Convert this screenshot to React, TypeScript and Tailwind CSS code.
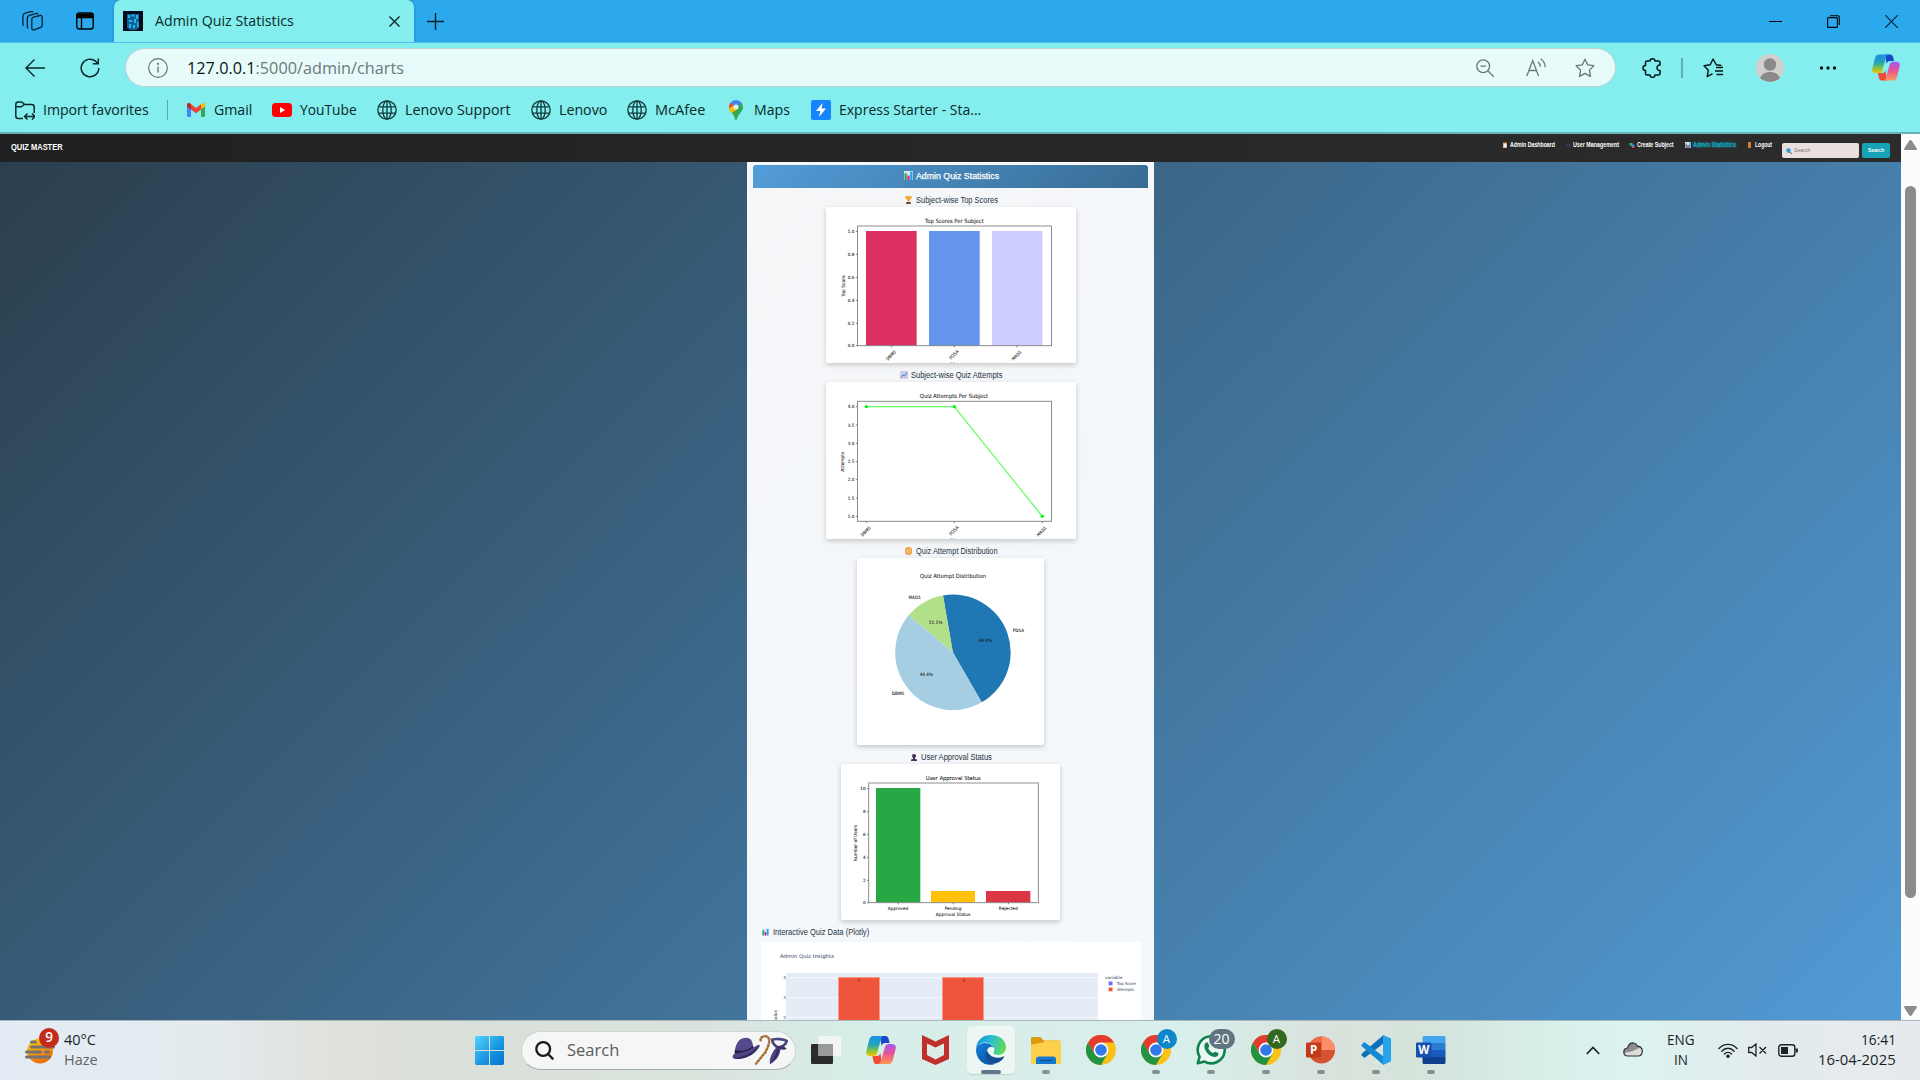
import { useLayoutEffect, useRef, useState } from "react";
import type { ReactNode } from "react";

/* Text squeezed or stretched horizontally to fill a given width. */
function Fit({ w, className = "", children }: { w: number; className?: string; children: ReactNode }) {
  const ref = useRef<HTMLSpanElement>(null);
  const [scale, setScale] = useState(1);
  useLayoutEffect(() => {
    if (ref.current) setScale(w / ref.current.offsetWidth);
  }, [w]);
  return (
    <span className={`block shrink-0 whitespace-nowrap ${className}`} style={{ width: w }}>
      <span ref={ref} className="inline-block origin-left" style={{ transform: `scaleX(${scale})` }}>
        {children}
      </span>
    </span>
  );
}

const UI = "font-['Open_Sans','Noto_Sans',sans-serif]";

function Globe() {
  return (
    <svg className="size-5 shrink-0" viewBox="0 0 20 20" fill="none" stroke="#12383a" strokeWidth="1.3">
      <circle cx="10" cy="10" r="9.2" />
      <ellipse cx="10" cy="10" rx="4.2" ry="9.2" />
      <path d="M1.6 6.8h16.8M1.6 13.2h16.8M10 .8v18.4" />
    </svg>
  );
}

function Copilot({ className, id }: { className: string; id: string }) {
  return (
    <svg className={className} viewBox="0 0 30 28">
      <defs>
        <linearGradient id={id + "a"} x1="0" y1="0" x2="0" y2="1">
          <stop offset="0" stopColor="#1b8fe8" />
          <stop offset=".45" stopColor="#23a6b4" />
          <stop offset=".75" stopColor="#8fc43a" />
          <stop offset="1" stopColor="#f5c400" />
        </linearGradient>
        <linearGradient id={id + "b"} x1="0" y1="0" x2="0" y2="1">
          <stop offset="0" stopColor="#a45cf0" />
          <stop offset=".45" stopColor="#e8519b" />
          <stop offset="1" stopColor="#fb9a55" />
        </linearGradient>
      </defs>
      <path d="M14 0h5.500c1.600 0 2.500 1 3 2.600L23.600 7H19c-2 0-2.900 1.300-3.400 3z" fill="#1746c9" />
      <path d="M16 28h-5.500c-1.600 0-2.500-1-3-2.600L6.400 20H11c2 0 2.900-1 3.400-3z" fill="#ee4a36" />
      <path d="M7.500 0H18c-1.600 0-2.500 1.500-3 3.200l-4 14C10.400 19.200 9 20 7.200 20H4c-3 0-4.400-2-3.600-5L3 4.500C3.800 1.500 5 0 7.500 0z" fill={`url(#${id}a)`} />
      <path d="M22.500 28H12c1.600 0 2.500-1.500 3-3.200l4-14c.6-2 2-2.900 3.800-2.900H26c3 0 4.400 2 3.600 5L27 23.500c-.8 2.800-2 4.500-4.500 4.500z" fill={`url(#${id}b)`} />
    </svg>
  );
}

function TitleBar() {
  return (
    <div className="flex h-[42px] items-center bg-[#2ba9ec]">
      <svg className="ml-[22px] h-5 w-[21px]" viewBox="0 0 21 20" fill="none" stroke="#06222f" strokeWidth="1.3" strokeLinejoin="round">
        <path d="M11.500 6.200l6.500-1.700c1.300-.3 2.200.4 2.200 1.700v8c0 1-.5 1.700-1.500 2.100l-6.500 2.500c-1.400.5-2.400-.2-2.400-1.600V8.500c0-1.200.6-2 1.700-2.300z" />
        <path d="M6.300 17.200C5.600 16.800 5.300 16.300 5.300 15.500V7c0-1.200.6-2 1.700-2.400l6.500-2c1.300-.4 2.200 0 2.600.8" />
        <path d="M1.900 14.700C1.200 14.300.9 13.800.9 13V4.800c0-1.200.6-2 1.700-2.400l5.900-1.700c1.300-.4 2.200 0 2.600.5" />
      </svg>
      <svg className="ml-[33px] size-[18px]" viewBox="0 0 18 18" fill="none" stroke="#000" strokeWidth="1.400">
        <rect x=".8" y="1" width="16.400" height="16" rx="2.500" />
        <path d="M1 2.500h16v3H1z" fill="#000" />
        <path d="M5.500 5v12" />
      </svg>
      <div className="ml-[20px] flex h-[42px] w-[300px] items-center rounded-t-[7px] bg-[#84eded] shadow-[0_0_3px_rgba(0,60,110,0.45)]">
        <svg className="ml-[9px] size-5" viewBox="0 0 20 20">
          <path d="M0 0h20v20H0z" fill="#020b1c" />
          <path d="M4 3h12v14l-3 2H7l-3-2z" fill="#0d5f96" />
          <path d="M5 4h2v3H5zM8.500 3.500h3v2h-3zM13 4h2v4h-2zM6 9h3v2H6zM11 8h2v4h-2zM6 13h2v4H6zM10 14h2v3h-2zM14 11h1.500v5H14z" fill="#26b6ee" />
        </svg>
        <Fit w={139} className={`ml-3 text-[14.500px] text-[#0a2a2c] ${UI}`}>Admin Quiz Statistics</Fit>
        <svg className="ml-[95px] size-[11px]" viewBox="0 0 11 11" stroke="#0c2022" strokeWidth="1.400">
          <path d="M.5.5l10 10M10.500.5l-10 10" />
        </svg>
      </div>
      <svg className="ml-[13px] size-[17px]" viewBox="0 0 17 17" stroke="#06222f" strokeWidth="1.400">
        <path d="M8.500 0v17M0 8.500h17" />
      </svg>
      <svg className="ml-auto h-[13px] w-[13px]" viewBox="0 0 13 13" stroke="#000" strokeWidth="1">
        <path d="M0 6.500h13" />
      </svg>
      <svg className="ml-[45px] size-[13px]" viewBox="0 0 13 13" fill="none" stroke="#000" strokeWidth="1.100">
        <rect x=".6" y="2.600" width="9.800" height="9.800" rx="1" />
        <path d="M3 .7h7.800c.9 0 1.500.6 1.500 1.500V10" />
      </svg>
      <svg className="mr-[22px] ml-[45px] size-[13px]" viewBox="0 0 13 13" stroke="#062536" strokeWidth="1.200">
        <path d="M0 0l13 13M13 0L0 13" />
      </svg>
    </div>
  );
}

const STAR = "M10 1.200l2.700 5.700 6.200.8-4.500 4.400 1.100 6.300L10 15.400l-5.500 3 1.100-6.300L1.100 7.700l6.200-.8z";

function AddressRow() {
  return (
    <div className="flex h-[49px] items-center">
      <svg className="ml-[25px] size-5" viewBox="0 0 20 20" fill="none" stroke="#082628" strokeWidth="1.400">
        <path d="M20 10H1M9.500 1.500L1 10l8.500 8.500" />
      </svg>
      <svg className="ml-[35px] size-5" viewBox="0 0 20 20" fill="none" stroke="#082628" strokeWidth="1.500">
        <path d="M18.800 10A8.800 8.800 0 1 1 15.600 3.200L18 5.500M18.300.5v5.300h-5.500" />
      </svg>
      <div className="ml-[25px] flex h-[39px] w-[1491px] items-center rounded-full border border-[#b9d3d3] bg-[#e7fbfb]">
        <svg className="ml-[22px] size-5" viewBox="0 0 20 20" fill="none" stroke="#667375" strokeWidth="1.200">
          <circle cx="10" cy="10" r="9.300" />
          <path d="M10 8.500v6" strokeWidth="1.400" />
          <circle cx="10" cy="5.800" r=".5" fill="#667375" />
        </svg>
        <Fit w={217} className={`ml-[19px] text-[17px] text-[#6d7879] ${UI}`}>
          <span className="text-[#0c1414]">127.0.0.1</span>:5000/admin/charts
        </Fit>
        <svg className="ml-auto size-[18px]" viewBox="0 0 18 18" fill="none" stroke="#6c7677" strokeWidth="1.300">
          <circle cx="7.200" cy="7.200" r="6.400" />
          <path d="M12 12l6 6M4.500 7.200h5.500" />
        </svg>
        <svg className="ml-[32px] h-[19px] w-5" viewBox="0 0 20 19" fill="none" stroke="#6c7677" strokeWidth="1.300">
          <path d="M.8 18L6.700 2.500 12.600 18M2.800 12.500h7.800M12 3.800c1.500 1.200 2.300 2.900 2.300 5M14.500.8c2.800 1.700 4.600 4.600 4.700 8.500" />
        </svg>
        <svg className="mr-[20px] ml-[29px] size-5" viewBox="0 0 20 20" fill="none" stroke="#6c7677" strokeWidth="1.300" strokeLinejoin="round">
          <path d={STAR} />
        </svg>
      </div>
      <svg className="ml-[26px] size-5" viewBox="0 0 20 20" fill="none" stroke="#051718" strokeWidth="1.500" strokeLinejoin="round">
        <path d="M5 3h3c0-3 5-3 5 0h3.500c1 0 1.500.6 1.500 1.500V7c-4-.6-4 6 0 5.500v3c0 1-.6 1.500-1.500 1.500H13c0 3.200-5 3.200-5 0H5c-1 0-1.500-.6-1.500-1.500V12.500C.2 12.500.2 7.500 3.500 7.500v-3C3.500 3.600 4 3 5 3z" />
      </svg>
      <div className="ml-[19px] h-5 w-0.5 bg-[#5fb2b3]" />
      <svg className="ml-[20px] size-5" viewBox="0 0 20 20" fill="none" stroke="#051718" strokeWidth="1.400" strokeLinejoin="round">
        <path d="M18.500 7.500l-5.300-.8L10 1 7.200 6.700 1 7.700l4.400 4.500L4.200 18.600l5.300-2.900M13 9.500h7M12 13h8M13.500 16.500H20" />
      </svg>
      <svg className="ml-[33px] size-7" viewBox="0 0 28 28">
        <circle cx="14" cy="14" r="14" fill="#d2d0ce" />
        <circle cx="14" cy="10.500" r="6.200" fill="#8b8988" />
        <path d="M4 24c2-4.500 6-6 10-6s8 1.500 10 6c-5.500 5-14.500 5-20 0z" fill="#8b8988" />
      </svg>
      <svg className="ml-[35px] h-1 w-[18px]" viewBox="0 0 18 4" fill="#051718">
        <circle cx="2.500" cy="2" r="1.700" />
        <circle cx="9" cy="2" r="1.700" />
        <circle cx="15.500" cy="2" r="1.700" />
      </svg>
      <Copilot id="cpt" className="ml-[35px] h-[27px] w-7" />
    </div>
  );
}

function FavoritesRow() {
  const label = `text-[14.500px] text-[#08282a] ${UI}`;
  return (
    <div className="flex h-9 items-center">
      <svg className="ml-[15px] h-[19px] w-5" viewBox="0 0 20 19" fill="none" stroke="#0b2b2d" strokeWidth="1.500">
        <path d="M8 17.500H3.500C1.800 17.500.8 16.500.8 15V3.500C.8 2 1.800 1 3.200 1h3.500l3 2.500h7c1.500 0 2.500 1 2.500 2.500v6M.8 5.800h5.500l3-2.300M10 15.500h9.500M12.500 12.500l-3 3 3 3M17 12.500l3 3-3 3" />
      </svg>
      <Fit w={106} className={`ml-2 ${label}`}>Import favorites</Fit>
      <div className="ml-[18px] h-5 w-px bg-[#58a9aa]" />
      <svg className="ml-[19px] h-[14px] w-[18px]" viewBox="0 0 18 14">
        <path d="M0 2v10.500C0 13.400.6 14 1.500 14H4V5z" fill="#4285f4" />
        <path d="M18 2v10.500c0 .9-.6 1.500-1.500 1.500H14V5z" fill="#34a853" />
        <path d="M14 1.200V6.500l4-3V2c0-2-2-2.500-3.200-1.500z" fill="#fbbc04" />
        <path d="M4 1.200V6.500L0 3.500V2C0 0 2-.5 3.200.5z" fill="#c5221f" />
        <path d="M4 1.200l5 3.800 5-3.800v5.300l-5 3.800-5-3.800z" fill="#ea4335" />
      </svg>
      <Fit w={38} className={`ml-[9px] ${label}`}>Gmail</Fit>
      <svg className="ml-[20px] h-[14px] w-5" viewBox="0 0 20 14">
        <rect width="20" height="14" rx="3.500" fill="#f00" />
        <path d="M8 4l5.200 3L8 10z" fill="#fff" />
      </svg>
      <Fit w={57} className={`ml-2 ${label}`}>YouTube</Fit>
      <div className="ml-5 flex"><Globe /></div>
      <Fit w={105} className={`ml-2 ${label}`}>Lenovo Support</Fit>
      <div className="ml-[21px] flex"><Globe /></div>
      <Fit w={48} className={`ml-2 ${label}`}>Lenovo</Fit>
      <div className="ml-5 flex"><Globe /></div>
      <Fit w={50} className={`ml-2 ${label}`}>McAfee</Fit>
      <svg className="ml-[24px] h-5 w-[14px]" viewBox="0 0 14 20">
        <path d="M2 11.500L11.800 2A7 7 0 0 1 14 7c0 5-5 6.500-6 12.300-.2.900-1.800.9-2 0C5.500 15.500 3.500 14 2 11.500z" fill="#34a853" />
        <path d="M1.700 2.400L5 5.500 0 9.500C-.2 6.500.2 4 1.700 2.400z" fill="#ea4335" />
        <path d="M1.700 2.400A7 7 0 0 1 12.300 2.400L9 6.500 5 5.500z" fill="#4285f4" />
        <path d="M0 8.500L4.600 5.500l3.500 4L2.800 13C1 11 .2 10 0 8.500z" fill="#fbbc04" />
        <circle cx="7" cy="7" r="2.500" fill="#d8f5f5" />
      </svg>
      <Fit w={36} className={`ml-[11px] ${label}`}>Maps</Fit>
      <svg className="ml-[21px] size-5" viewBox="0 0 20 20">
        <rect width="20" height="20" rx="2" fill="#1684fc" />
        <path d="M11.500 3L5 11h4.300L8 17l7-8.500h-4.300z" fill="#fff" />
      </svg>
      <Fit w={142} className={`ml-2 ${label}`}>Express Starter - Sta...</Fit>
    </div>
  );
}

function BarsEmoji({ className }: { className: string }) {
  return (
    <svg className={className} viewBox="0 0 16 16">
      <path d="M0 0h16v16H0z" fill="#e3e3f1" />
      <path d="M1 4h4v12H1z" fill="#19a66a" />
      <path d="M6 8h4v8H6z" fill="#f0128d" />
      <path d="M11 1h4v15h-4z" fill="#19a9e6" />
    </svg>
  );
}

function NavBar() {
  const link = "text-[6.500px] leading-none font-bold text-white font-['Liberation_Sans',sans-serif]";
  return (
    <nav className="flex h-7 bg-linear-to-r from-[#202020] to-[#2c2c2c]">
      <Fit w={52} className="mt-[8px] ml-[11px] text-[8.500px] leading-[11px] font-bold text-white font-['Liberation_Sans',sans-serif]">QUIZ MASTER</Fit>
      <div className="mt-[8px] ml-auto flex h-[6px] items-center">
        <svg className="h-[6px] w-1" viewBox="0 0 8 12">
          <path d="M0 1h8v11H0z" fill="#e8893a" />
          <path d="M1 3h6v8H1z" fill="#e9edf5" />
        </svg>
        <Fit w={45} className={`ml-[3px] ${link}`}>Admin Dashboard</Fit>
        <svg className="ml-[11px] h-[4px] w-[5px]" viewBox="0 0 10 8">
          <circle cx="2.500" cy="3" r="1.700" fill="#59407a" />
          <circle cx="7.500" cy="3" r="1.700" fill="#59407a" />
          <path d="M0 7h10v1H0z" fill="#59407a" />
        </svg>
        <Fit w={46} className={`ml-[2px] ${link}`}>User Management</Fit>
        <svg className="ml-[10px] h-[5px] w-[6px]" viewBox="0 0 10 10">
          <path d="M0 0h6v5H0z" fill="#35c44c" />
          <path d="M4 3h6v5H4z" fill="#1f9ce8" />
          <path d="M5 7h5v3H5z" fill="#e63a3a" />
        </svg>
        <Fit w={37} className={`ml-[2px] ${link}`}>Create Subject</Fit>
        <BarsEmoji className="ml-[11px] h-[6px] w-[6px]" />
        <Fit w={43} className="ml-[2px] text-[6.500px] leading-none font-bold text-[#13a5bd] font-['Liberation_Sans',sans-serif] [text-shadow:0_0_3px_#17a2b8]">Admin Statistics</Fit>
        <svg className="ml-[12px] h-[6px] w-[3px]" viewBox="0 0 6 12">
          <path d="M0 0h6v12H0z" fill="#d67c2c" />
        </svg>
        <Fit w={17} className={`ml-[4px] ${link}`}>Logout</Fit>
      </div>
      <div className="mt-[9px] ml-[10px] flex h-[15px] w-[77px] items-center rounded-[2px] bg-[#e9dfde]">
        <svg className="ml-[4px] size-[6px]" viewBox="0 0 12 12">
          <circle cx="5" cy="5" r="4.500" fill="#2a9be0" />
          <path d="M7.500 8l4 4" stroke="#4c4265" strokeWidth="2" />
        </svg>
        <Fit w={16} className="ml-[2px] text-[5.500px] leading-none text-[#777] font-['Liberation_Sans',sans-serif]">Search</Fit>
      </div>
      <div className="mt-[9px] mr-[11px] ml-[3px] flex h-[15px] w-7 items-center justify-center rounded-[2px] bg-[#17a2b8]">
        <Fit w={16} className="text-[5.500px] leading-none font-bold text-white font-['Liberation_Sans',sans-serif]">Search</Fit>
      </div>
    </nav>
  );
}

function Label({ x, y, w, size, color = "#222", rotate, anchor = "middle", children }: {
  x: number; y: number; w: number; size: number; color?: string; rotate?: number; anchor?: "start" | "middle" | "end"; children: string;
}) {
  return (
    <text
      x={x}
      y={y}
      fontSize={size}
      fill={color}
      stroke={color}
      strokeWidth=".2"
      textAnchor={anchor}
      dominantBaseline="central"
      textLength={w}
      lengthAdjust="spacingAndGlyphs"
      transform={rotate ? `rotate(${rotate} ${x} ${y})` : undefined}
    >
      {children}
    </text>
  );
}

const CHART = "block rounded-[2px] bg-white shadow-[0_2px_5px_rgba(0,0,0,0.2)] font-['DejaVu_Sans',sans-serif]";

function Axes({ x, y, w, h, ticksY, ticksX, labelX }: {
  x: number; y: number; w: number; h: number; ticksY: [number, string][]; ticksX: number[]; labelX: number;
}) {
  return (
    <g>
      <rect x={x} y={y} width={w} height={h} fill="none" stroke="#8d8d8d" strokeWidth="3" />
      {ticksY.map(([ty, t]) => (
        <g key={t}>
          <path d={`M${x - 5} ${ty}H${x}`} stroke="#666" strokeWidth="2.500" />
          <Label x={labelX} y={ty} w={t.length > 2 ? 20 : t.length * 8} size={13} anchor="end">{t}</Label>
        </g>
      ))}
      {ticksX.map((tx) => (
        <path key={tx} d={`M${tx} ${y + h}v5`} stroke="#666" strokeWidth="2.500" />
      ))}
    </g>
  );
}

function TopScores() {
  return (
    <svg className={`h-[156px] w-[250px] ${CHART}`} viewBox="258 141 750 468">
      <Label x={643} y={184} w={176} size={17}>Top Scores Per Subject</Label>
      <path d="M378 213h152v345H378z" fill="#dc3060" />
      <path d="M567 213h152v345H567z" fill="#6495ed" />
      <path d="M756 213h151v345H756z" fill="#ccccff" />
      <Axes x={352.500} y={198} w={582} h={359} labelX={343} ticksX={[454, 643, 831]}
        ticksY={[[214, "1.0"], [283, "0.8"], [352, "0.6"], [421, "0.4"], [490, "0.2"], [557, "0.0"]]} />
      <Label x={309} y={378} w={64} size={13.500} rotate={-90}>Top Score</Label>
      <Label x={453} y={586} w={36} size={13} rotate={-45}>DBMS</Label>
      <Label x={642} y={584} w={34} size={13} rotate={-45}>PDSA</Label>
      <Label x={830} y={586} w={36} size={13} rotate={-45}>MAD1</Label>
      <path d="M631 608h4M639 608h4" stroke="#777" strokeWidth="2" />
    </svg>
  );
}

function Attempts() {
  return (
    <svg className={`h-[157px] w-[250px] ${CHART}`} viewBox="258 51 750 471">
      <Label x={642} y={94} w={205} size={17}>Quiz Attempts Per Subject</Label>
      <Axes x={352.500} y={109} w={582} h={360} labelX={343} ticksX={[379, 643, 907]}
        ticksY={[[125, "4.0"], [180, "3.5"], [235, "3.0"], [290, "2.5"], [344, "2.0"], [399, "1.5"], [454, "1.0"]]} />
      <path d="M379 125h264l264 329" fill="none" stroke="#3dff3d" strokeWidth="3.200" />
      <circle cx="379" cy="125" r="5" fill="#00f818" />
      <circle cx="643" cy="125" r="5" fill="#00f818" />
      <circle cx="907" cy="454" r="5" fill="#00f818" />
      <Label x={309} y={290} w={60} size={13.500} rotate={-90}>Attempts</Label>
      <Label x={377} y={499} w={36} size={13} rotate={-45}>DBMS</Label>
      <Label x={642} y={497} w={34} size={13} rotate={-45}>PDSA</Label>
      <Label x={905} y={499} w={36} size={13} rotate={-45}>MAD1</Label>
      <path d="M631 521h4M639 521h4" stroke="#777" strokeWidth="2" />
    </svg>
  );
}

function Distribution() {
  return (
    <svg className={`size-[187px] ${CHART}`} viewBox="351 54 561 561">
      <Label x={639} y={108} w={198} size={17}>Quiz Attempt Distribution</Label>
      <path d="M638.500 337L725 487A173 173 0 0 0 609 166.500z" fill="#1f78b4" />
      <path d="M638.500 337L609 166.500A173 173 0 0 0 506 226z" fill="#b2df8a" />
      <path d="M638.500 337L506 226A173 173 0 0 0 725 487z" fill="#a6cee3" />
      <Label x={524} y={172} w={37} size={13}>MAD1</Label>
      <Label x={835} y={271} w={34} size={13}>PDSA</Label>
      <Label x={474} y={459} w={38} size={13}>DBMS</Label>
      <Label x={587} y={246} w={41} size={13}>11.1%</Label>
      <Label x={736} y={300} w={40} size={13} color="#0a1a26">44.4%</Label>
      <Label x={559} y={403} w={40} size={13}>44.4%</Label>
    </svg>
  );
}

function Approval() {
  return (
    <svg className={`h-[156px] w-[219px] ${CHART}`} viewBox="303 57 657 468">
      <Label x={640} y={100} w={165} size={16.500}>User Approval Status</Label>
      <path d="M408 129h133v344H408z" fill="#28a745" />
      <path d="M573 438h132v35H573z" fill="#ffc107" />
      <path d="M738 438h133v35H738z" fill="#dc3545" />
      <Axes x={386} y={114} w={509} h={359} labelX={377} ticksX={[475, 640, 805]}
        ticksY={[[131, "10"], [200, "8"], [268, "6"], [337, "4"], [406, "2"], [473, "0"]]} />
      <Label x={347} y={294} w={110} size={13.500} rotate={-90}>Number of Users</Label>
      <Label x={474} y={489} w={61} size={13}>Approved</Label>
      <Label x={639} y={489} w={50} size={13}>Pending</Label>
      <Label x={805} y={489} w={57} size={13}>Rejected</Label>
      <Label x={639} y={507} w={104} size={13.500}>Approval Status</Label>
    </svg>
  );
}

function Insights() {
  return (
    <svg className="block h-[78px] w-[380px] bg-white font-['DejaVu_Sans','Open_Sans',sans-serif]" viewBox="63 81 1140 234">
      <Label x={120} y={124} w={162} size={15.500} anchor="start" color="#4b5a75">Admin Quiz Insights</Label>
      <path d="M138 174h936v145H138z" fill="#e5ecf6" />
      <path d="M138 187.500h936M138 247.500h936M138 307.500h936" stroke="#f3f6fc" strokeWidth="3" />
      <path d="M294 186h126v140H294zM606 186h126v140H606z" fill="#f39a88" />
      <path d="M297 189h120v140H297zM609 189h120v140H609z" fill="#ef553b" />
      <Label x={357} y={196} w={7} size={12} color="#5a2b29">4</Label>
      <Label x={670} y={196} w={7} size={12} color="#5a2b29">4</Label>
      <Label x={138} y={188} w={8} size={12} anchor="end" color="#4b5a75">4</Label>
      <Label x={138} y={248} w={8} size={12} anchor="end" color="#4b5a75">3</Label>
      <Label x={138} y={308} w={8} size={12} anchor="end" color="#4b5a75">2</Label>
      <Label x={108} y={302} w={34} size={13} rotate={-90} color="#4b5a75">value</Label>
      <Label x={1095} y={188} w={52} size={12.500} anchor="start" color="#4b5a75">variable</Label>
      <path d="M1105 198h13v14h-13z" fill="#bcc1fb" />
      <path d="M1107 201h10v9h-10z" fill="#636efa" />
      <path d="M1105 216h13v14h-13z" fill="#f7b9ac" />
      <path d="M1107 219h10v9h-10z" fill="#ef553b" />
      <Label x={1131} y={206} w={57} size={12} anchor="start" color="#4b5a75">Top Score</Label>
      <Label x={1131} y={224} w={51} size={12} anchor="start" color="#4b5a75">Attempts</Label>
    </svg>
  );
}

function Heading({ w, icon, gap = "gap-1", children }: { w: number; icon: ReactNode; gap?: string; children: string }) {
  return (
    <div className={`flex h-[19px] items-center pt-[5px] pl-[1px] ${gap} text-[#26323f]`}>
      {icon}
      <Fit w={w} className="text-[8.500px] leading-[12px] font-['Liberation_Sans',sans-serif]">{children}</Fit>
    </div>
  );
}

function StatsPanel() {
  return (
    <main className="mx-auto flex h-[858px] w-[407px] flex-col items-center overflow-hidden bg-[linear-gradient(135deg,#f5f6f8,#f3f8fb)] pt-[3px]">
      <div className="flex h-[23px] w-[395px] shrink-0 items-center justify-center gap-[3px] rounded-t-[3px] bg-[linear-gradient(135deg,#529dd9,#386b92)] pb-[2px] pl-[1px]">
        <BarsEmoji className="size-[9px]" />
        <Fit w={83} className="text-[9px] leading-[12px] text-white [-webkit-text-stroke:0.25px_white] font-['Liberation_Sans',sans-serif]">Admin Quiz Statistics</Fit>
      </div>
      <Heading w={82} icon={
        <svg className="h-2 w-[7px]" viewBox="0 0 14 16">
          <path d="M3 0h8v5c0 3-2 5-4 5S3 8 3 5z" fill="#f9a825" />
          <path d="M0 1h3v5H2zM11 1h3l-2 5h-1zM6 9h2v4H6z" fill="#e88d20" />
          <path d="M3 12h8l1 4H2z" fill="#6b4436" />
        </svg>
      }>Subject-wise Top Scores</Heading>
      <TopScores />
      <Heading w={91} gap="gap-[3px]" icon={
        <svg className="size-2" viewBox="0 0 16 16">
          <path d="M0 0h16v16H0z" fill="#cfcce6" />
          <path d="M2 13l4-5 3 2 5-7" stroke="#3b7fd6" strokeWidth="2" fill="none" />
        </svg>
      }>Subject-wise Quiz Attempts</Heading>
      <Attempts />
      <Heading w={82} icon={
        <svg className="h-2 w-[7px]" viewBox="0 0 14 16">
          <rect width="14" height="16" rx="6" fill="#e8a04a" />
          <rect x="2" y="2" width="10" height="11" rx="4" fill="#f3b866" />
        </svg>
      }>Quiz Attempt Distribution</Heading>
      <Distribution />
      <Heading w={71} icon={
        <svg className="h-[7px] w-[6px]" viewBox="0 0 12 14">
          <circle cx="6" cy="4" r="4" fill="#4b2c5e" />
          <path d="M4 6h4v4l4 1v3H0v-3l4-1z" fill="#4b2c5e" />
        </svg>
      }>User Approval Status</Heading>
      <Approval />
      <div className="flex h-[22px] shrink-0 items-center self-start pt-[2px] pl-[15px] text-[#26323f]">
        <BarsEmoji className="mr-[4px] h-2 w-[7px]" />
        <Fit w={96} className="text-[8.500px] leading-[12px] font-['Liberation_Sans',sans-serif]">Interactive Quiz Data (Plotly)</Fit>
      </div>
      <Insights />
    </main>
  );
}

function ScrollBar() {
  return (
    <div className="flex w-[19px] flex-col items-center bg-[#fcfcfc]">
      <svg className="mt-1.5 h-[10px] w-[13px]" viewBox="0 0 13 10">
        <path d="M6.500 0c.7 0 1 .3 1.400.9l4.600 7c.6 1 .3 2-.8 2H1.300c-1.100 0-1.400-1-.8-2L5.100.9C5.500.3 5.800 0 6.500 0z" fill="#8b8b8b" />
      </svg>
      <div className="mt-[36px] h-[712px] w-[11px] rounded-full bg-[#8b8b8b]" />
      <svg className="mt-[108px] h-[10px] w-[13px]" viewBox="0 0 13 10">
        <path d="M6.500 10c.7 0 1-.3 1.400-.9l4.600-7c.6-1 .3-2-.8-2H1.300c-1.100 0-1.400 1-.8 2l4.600 7c.4.6.7.9 1.400.9z" fill="#8b8b8b" />
      </svg>
    </div>
  );
}

function Chrome() {
  return (
    <svg className="size-[30px]" viewBox="0 0 30 30">
      <circle cx="15" cy="15" r="15" fill="#fbc116" />
      <path d="M2 7.500A15 15 0 0 1 28 7.500H15L8.500 18.700z" fill="#e33b2e" />
      <path d="M2 7.500A15 15 0 0 0 15 30L21.500 18.700H8.500z" fill="#229342" />
      <circle cx="15" cy="15" r="7.400" fill="#fff" />
      <circle cx="15" cy="15" r="5.800" fill="#3079ea" />
    </svg>
  );
}

function Slot({ open, active, children }: { open?: boolean; active?: boolean; children: ReactNode }) {
  return (
    <div className="flex w-[55px] justify-center">
      <div className={active ? "flex h-12 w-12 flex-col items-center rounded-[5px] bg-[#eef6f4] shadow-[0_1px_1px_rgba(0,0,0,0.12)]" : "flex h-12 w-12 flex-col items-center"}>
        <div className="relative mt-[9px] flex h-[30px] w-[30px] items-center justify-center">{children}</div>
        {active && <div className="mt-[5px] h-1 w-5 rounded-full bg-[#607888]" />}
        {open && <div className="mt-[5px] h-1 w-2 rounded-full bg-[#85918f]" />}
      </div>
    </div>
  );
}

function Badge({ className, children }: { className: string; children: string }) {
  return (
    <span className={`absolute -top-[6px] flex h-5 items-center justify-center rounded-full leading-none ${UI} ${className}`}>{children}</span>
  );
}

function TaskBar() {
  return (
    <footer className={`flex h-[60px] items-center shadow-[inset_0_1px_0_#a9b8bd] bg-[linear-gradient(90deg,#e3ecf4_0%,#e4ebee_11%,#dfe0da_18%,#d9e0d9_25%,#dbe3de_37%,#d6ede8_44%,#d9eeea_55%,#d9efeb_62%,#d9e2dc_69%,#d5e4dc_75%,#d7ede6_79%,#dcf3f1_85%,#e3ebee_92%,#e6eaef_100%)] ${UI}`}>
      <div className="relative ml-[25px] h-[44px] w-[30px]">
        <svg className="mt-[9px] h-[30px] w-[30px]" viewBox="0 0 30 30">
          <defs>
            <linearGradient id="sun" x1="0" y1="0" x2=".5" y2="1">
              <stop offset="0" stopColor="#fbd310" />
              <stop offset="1" stopColor="#ef6c0a" />
            </linearGradient>
          </defs>
          <ellipse cx="15" cy="14" rx="13" ry="12.500" fill="url(#sun)" />
          <path d="M6.500 5h4M6.500 10h22M1.500 15h14M20.500 15h3M1.500 20h23" stroke="#737373" strokeWidth="3" strokeLinecap="round" />
        </svg>
        <span className="absolute top-0 left-[14px] flex size-5 items-center justify-center rounded-full bg-[#c42b1c] text-[13.500px] leading-none font-semibold text-white">9</span>
      </div>
      <div className="ml-[9px] flex flex-col">
        <Fit w={32} className="text-[14.500px] leading-5 text-[#1b1f22]">40°C</Fit>
        <Fit w={34} className="text-[14.500px] leading-5 text-[#5f6568]">Haze</Fit>
      </div>
      <svg className="ml-[377px] size-[29px]" viewBox="0 0 29 29">
        <defs>
          <linearGradient id="win" gradientUnits="userSpaceOnUse" x1="0" y1="0" x2="29" y2="29">
            <stop offset="0" stopColor="#54d4fd" />
            <stop offset=".6" stopColor="#1592df" />
            <stop offset="1" stopColor="#0773d0" />
          </linearGradient>
        </defs>
        <path d="M1 0h13v14H0V1zM15 0h13l1 1v13H15zM0 15h14v14H1l-1-1zM15 15h14v13l-1 1H15z" fill="url(#win)" />
      </svg>
      <div className="ml-[17px] flex h-[39px] w-[275px] items-center rounded-full border border-[#cfd5d2] border-b-[#a5adaa] bg-[#f5f7f6]">
        <svg className="ml-[13px] size-[19px]" viewBox="0 0 19 19" fill="none" stroke="#1b1b1b" strokeWidth="2.300" strokeLinecap="round">
          <circle cx="8.200" cy="8" r="6.900" />
          <path d="M13.300 13.200l4.300 4.400" />
        </svg>
        <Fit w={52} className="ml-[13px] text-[16.500px] leading-6 text-[#5b5b5b]">Search</Fit>
        <svg className="ml-auto mr-[7px] h-[30px] w-[56px]" viewBox="0 0 168 90">
          <path d="M8 50C12 18 26 8 42 8c16 0 20 12 22 30L12 60z" fill="#54498a" />
          <path d="M9 44c18 8 38 2 54-12l2 10C48 58 26 62 8 56z" fill="#231d42" />
          <path d="M2 68C0 54 14 56 30 52 50 48 66 36 78 30c6-2 6 2 4 6-8 14-26 28-44 32-14 4-30 6-36 0z" fill="#4d4482" />
          <path d="M6 68c24 0 52-10 72-34-6 22-28 32-44 36-12 2-22 2-28-2z" fill="#342c5e" />
          <path d="M86 16C84 4 104-2 110 10c6 12-4 30-10 42L72 86" fill="none" stroke="#b98445" strokeWidth="7" strokeLinecap="round" />
          <path d="M86 16C84 4 104-2 110 10c6 12-4 30-10 42L72 86" fill="none" stroke="#6e421b" strokeWidth="7" strokeDasharray="2 9" />
          <path d="M120 14c14-4 34-2 44 4-2 12-12 16-24 20-10-4-18-14-20-24z" fill="none" stroke="#4b4280" strokeWidth="8" />
          <path d="M132 38l14 2c-2 18-8 34-32 48-4-16 6-36 18-50z" fill="#4b4280" />
          <path d="M136 42l6 3c-4 14-12 28-26 40 10-16 18-28 20-43z" fill="#2d2654" />
          <path d="M134 34c12-4 24 0 30 8-8 4-20 2-28-2z" fill="#3a3268" />
        </svg>
      </div>
      <div className="ml-[2px] flex">
        <Slot>
          <svg className="h-7 w-[30px] shrink-0" viewBox="0 0 30 28">
            <path d="M1 8h21v19a1 1 0 0 1-1 1H1a1 1 0 0 1-1-1V9a1 1 0 0 1 1-1z" fill="#2b2c2b" />
            <rect x="7.500" y="0" width="22.500" height="20" rx="1" fill="#f3f5f4" />
            <path d="M7.500 8H22v12H7.500z" fill="#979a98" />
          </svg>
        </Slot>
        <Slot><Copilot id="cpb" className="h-7 w-[30px]" /></Slot>
        <Slot>
          <svg className="h-[30px] w-[27px] shrink-0" viewBox="0 0 27 30">
            <path d="M0 0l13.500 6.500L27 0v24l-13.500 6L0 24z" fill="#c12f2d" />
            <path d="M5 8.500l8.500 4 8.500-4v11.500l-8.500 4.500L5 20z" fill="#dcece8" />
          </svg>
        </Slot>
        <Slot active>
          <svg className="size-[30px]" viewBox="0 0 30 30">
            <defs>
              <linearGradient id="edgeTop" x1="0" y1=".3" x2="1" y2=".5">
                <stop offset="0" stopColor="#1291d8" />
                <stop offset=".5" stopColor="#2cbfd0" />
                <stop offset="1" stopColor="#63dc52" />
              </linearGradient>
              <linearGradient id="edgeLeft" x1="0" y1="0" x2=".6" y2="1">
                <stop offset="0" stopColor="#1380d8" />
                <stop offset="1" stopColor="#0d58a8" />
              </linearGradient>
            </defs>
            <path d="M0 15C0 6 6 0 15 0c8.500 0 15 5.500 15 12 0 5-3.500 8-8 8-2.500 0-5-.8-4.500-2.400.7-1 .9-1.800.9-3C18.400 10 13 7.500 9 7.500 4 7.500.5 10 0 15z" fill="url(#edgeTop)" />
            <path d="M0 15C.5 10 4 8 9 8c5 0 8.500 3 9 5-2.500-2.500-6-1-7 2.500C9.500 20 12 27 19 29 9 32.500 0 25 0 15z" fill="url(#edgeLeft)" />
            <path d="M11 15.500C8.500 18 9 24 13 27c5 3.500 12 .5 15-5 .3-.6-.2-.9-.8-.6-4 2-10 1.600-13-1.400-1.700-1.500-2.600-3-3.200-4.500z" fill="#134e94" />
          </svg>
        </Slot>
        <Slot open>
          <svg className="h-[27px] w-[30px] shrink-0" viewBox="0 0 30 27">
            <path d="M0 1.500C0 .7.700 0 1.500 0h8l3 3.500H28V8H0z" fill="#dc9a0d" />
            <path d="M0 7.500L12 5.500 14.500 3.500H29a1 1 0 0 1 1 1V26a1 1 0 0 1-1 1H1a1 1 0 0 1-1-1z" fill="#fdd04c" />
            <path d="M5 27v-4.500C5 20.500 6 19.500 8 19.500h14c2 0 3 1 3 3V27z" fill="#1579cd" />
            <path d="M9 23.500h12" stroke="#0b4f8e" strokeWidth="1.300" />
          </svg>
        </Slot>
        <Slot><Chrome /></Slot>
        <Slot open>
          <Chrome />
          <Badge className="left-[16px] w-5 bg-[#0e86cb] text-[11.500px] text-white">A</Badge>
        </Slot>
        <Slot open>
          <svg className="size-[30px] shrink-0" viewBox="0 0 30 30">
            <path d="M1.800 28.300l1.800-6.600A13.500 13.500 0 1 1 8.600 26.600z" fill="#eaf6f2" stroke="#128150" strokeWidth="2.600" strokeLinejoin="round" />
            <path d="M9.500 8c1-1 2.300-.8 2.700.2l1.100 2.700c.2.800-1.300 1.900-1 2.500 1 2.100 2.600 3.500 4.700 4.500.7.300 1.500-1.500 2.300-1.200l2.700 1.300c.9.500.6 2-.5 3-2.200 2-6 .7-9-1.800-3.300-2.700-5.600-8.400-3-11.200z" fill="#128150" />
          </svg>
          <Badge className="left-[13px] w-[26px] bg-[#607580] text-[14px] text-white">20</Badge>
        </Slot>
        <Slot open>
          <Chrome />
          <Badge className="left-[16px] w-5 bg-[#33691e] text-[11.500px] text-white">A</Badge>
        </Slot>
        <Slot open>
          <svg className="size-[30px] shrink-0 font-['Open_Sans',sans-serif]" viewBox="0 0 30 30">
            <circle cx="15.500" cy="15" r="13.500" fill="#d35230" />
            <path d="M15.500 1.500A13.500 13.500 0 0 1 29 15H15.500z" fill="#ff8f6b" />
            <path d="M15.500 1.500A13.500 13.500 0 0 0 2 15h13.500z" fill="#ed6c47" />
            <rect x="0" y="7.500" width="15" height="15" rx="1.300" fill="#c13b1b" />
            <text x="7.500" y="19.200" fontSize="11.500" fontWeight="700" fill="#fff" textAnchor="middle">P</text>
          </svg>
        </Slot>
        <Slot open>
          <svg className="size-[30px] shrink-0" viewBox="0 0 30 30">
            <path d="M22.500 0L1 18.500c-.8.700-.8 1.600 0 2.300l1.600 1.500c.6.500 1.200.5 1.800 0L22.500 8.500z" fill="#0d6fb8" />
            <path d="M22.500 30L1 11.500c-.8-.7-.8-1.600 0-2.300l1.600-1.500c.6-.5 1.200-.5 1.800 0l18.100 13.800z" fill="#1589d2" />
            <path d="M22 0l8 3.500v23L22 30z" fill="#27a4ee" />
          </svg>
        </Slot>
        <Slot open>
          <svg className="size-[30px] shrink-0 font-['Open_Sans',sans-serif]" viewBox="0 0 30 30">
            <path d="M6.500 2.500A1.500 1.500 0 0 1 8 1h20a1.500 1.500 0 0 1 1.500 1.500V8h-23z" fill="#41a5ee" />
            <path d="M6.500 8h23v7h-23z" fill="#2b7cd3" />
            <path d="M6.500 15h23v7h-23z" fill="#185abd" />
            <path d="M6.500 22h23v5.500A1.500 1.500 0 0 1 28 29H8a1.500 1.500 0 0 1-1.500-1.500z" fill="#103f91" />
            <rect x="0" y="7.500" width="15.500" height="15" rx="1.300" fill="#1650ab" />
            <text x="7.700" y="19.200" fontSize="11.500" fontWeight="700" fill="#fff" textAnchor="middle">W</text>
          </svg>
        </Slot>
      </div>
      <svg className="ml-auto h-[9px] w-[14px]" viewBox="0 0 14 9" fill="none" stroke="#1c2220" strokeWidth="1.700">
        <path d="M.8 8L7 1.500 13.200 8" />
      </svg>
      <svg className="mb-[2px] ml-[23px] h-[15px] w-5" viewBox="0 0 20 15">
        <path d="M5 14C-.5 14-.5 6.500 4.600 6 6 1 8.500 .8 10.500 1c2 .2 3.200 1.500 4.200 3.200C19 4.500 19.500 8 19.200 10c-.3 2.500-1.800 4-4 4z" fill="#8d8d8d" />
        <path d="M5 14c-2.500 0-3.500-1.500-3.500-3L10 9l6-3c2.500 0 3.200 2 3.200 4 0 2.500-1.800 4-4 4z" fill="#dcdcdc" />
        <path d="M5 14C-.5 14-.5 6.500 4.600 6 6 1 8.500 .8 10.500 1c2 .2 3.200 1.500 4.200 3.200C19 4.500 19.500 8 19.200 10c-.3 2.500-1.800 4-4 4z" fill="none" stroke="#2e2e2e" strokeWidth="1.200" />
      </svg>
      <div className="ml-6 flex w-7 flex-col items-center text-[14.500px] leading-5 text-[#1b1f1e]">
        <Fit w={28}>ENG</Fit>
        <Fit w={14}>IN</Fit>
      </div>
      <svg className="ml-[23px] h-[15px] w-5" viewBox="0 0 20 15" fill="none" stroke="#1d2423" strokeWidth="1.400" strokeLinecap="round">
        <path d="M1 5.500c5-5.500 13-5.500 18 0M3.800 8.200c3.600-3.900 8.800-3.900 12.400 0M6.500 11c2-2.200 5-2.200 7 0" />
        <circle cx="10" cy="13.200" r="1.100" fill="#1d2423" />
      </svg>
      <svg className="ml-[10px] h-[14px] w-[19px]" viewBox="0 0 19 14" fill="none" stroke="#1d2423" strokeWidth="1.300">
        <path d="M.7 4.500h3L8 1v12L3.700 9.500h-3zM11.500 4l6.500 6.500M18 4l-6.500 6.500" />
      </svg>
      <svg className="ml-[11px] h-[13px] w-5" viewBox="0 0 20 13" fill="none" stroke="#1d2423" strokeWidth="1.400">
        <rect x=".8" y=".8" width="16" height="11.400" rx="2.500" />
        <path d="M3 3h7v7H3z" fill="#1d2423" stroke="none" />
        <path d="M18.700 4.500v4" strokeWidth="2.200" />
      </svg>
      <div className="mr-6 ml-[20px] flex flex-col items-end text-[14.500px] leading-5 text-[#1b1f1e]">
        <Fit w={35}>16:41</Fit>
        <Fit w={78}>16-04-2025</Fit>
      </div>
    </footer>
  );
}

export default function App() {
  return (
    <div className="flex h-[1080px] w-[1920px] flex-col overflow-hidden">
      <TitleBar />
      <div className="flex h-[92px] flex-col border-b-2 border-[#63b6b6] border-t border-t-[#4fbde8] bg-[#84eded]">
        <AddressRow />
        <FavoritesRow />
      </div>
      <div className="flex h-[886px]">
        <div className="flex w-[1901px] flex-col bg-[linear-gradient(135deg,#2b3e4c,#529bd5)]">
          <NavBar />
          <StatsPanel />
        </div>
        <ScrollBar />
      </div>
      <TaskBar />
    </div>
  );
}
